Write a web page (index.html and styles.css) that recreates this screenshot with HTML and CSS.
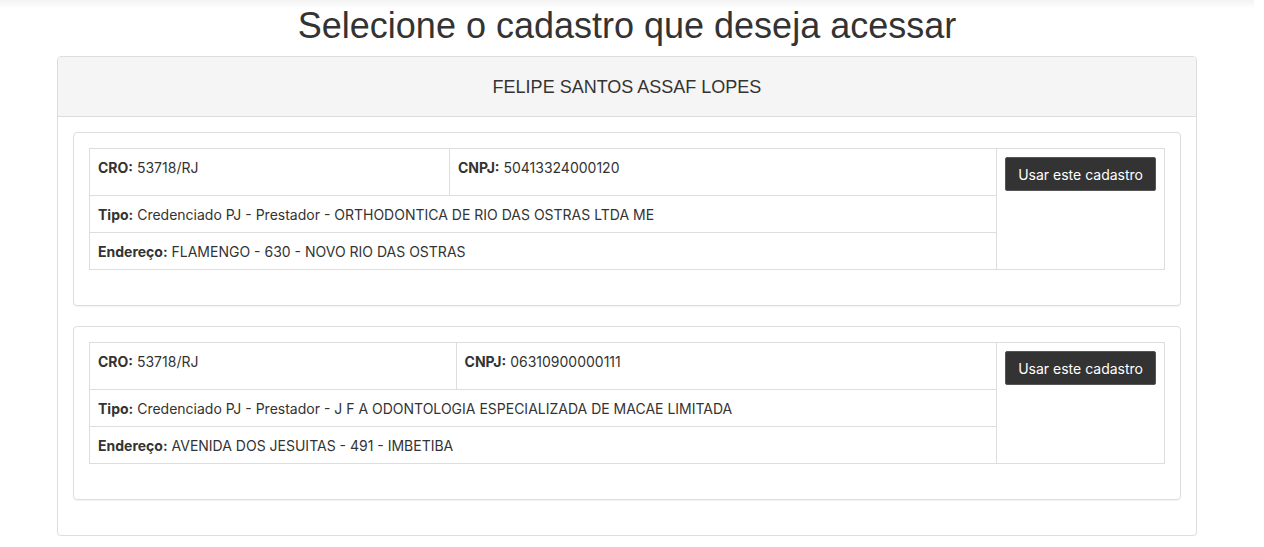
FILE: index.html
```html
<!DOCTYPE html>
<html lang="pt-BR">
<head>
  <meta charset="UTF-8">
  <meta name="viewport" content="width=device-width, initial-scale=1.0">
  <title>Selecione o cadastro</title>
  <link rel="stylesheet" href="styles.css">
</head>
<body>
  <!-- sombra da barra superior -->
  <div class="top-shadow"></div>

  <div class="container">
    <h1>Selecione o cadastro que deseja acessar</h1>

    <div class="panel">
      <div class="panel-heading">FELIPE SANTOS ASSAF LOPES</div>
      <div class="panel-body">

        <div class="card">
          <table class="cadastro">
            <tr class="first-row">
              <td><b>CRO:</b> 53718/RJ</td>
              <td><b>CNPJ:</b> 50413324000120</td>
              <td class="action" rowspan="3"><button class="btn">Usar este cadastro</button></td>
            </tr>
            <tr>
              <td colspan="2"><b>Tipo:</b> Credenciado PJ - Prestador - ORTHODONTICA DE RIO DAS OSTRAS LTDA ME</td>
            </tr>
            <tr>
              <td colspan="2"><b>Endereço:</b> FLAMENGO - 630 - NOVO RIO DAS OSTRAS</td>
            </tr>
          </table>
        </div>

        <div class="card">
          <table class="cadastro">
            <tr class="first-row">
              <td><b>CRO:</b> 53718/RJ</td>
              <td><b>CNPJ:</b> 06310900000111</td>
              <td class="action" rowspan="3"><button class="btn">Usar este cadastro</button></td>
            </tr>
            <tr>
              <td colspan="2"><b>Tipo:</b> Credenciado PJ - Prestador - J F A ODONTOLOGIA ESPECIALIZADA DE MACAE LIMITADA</td>
            </tr>
            <tr>
              <td colspan="2"><b>Endereço:</b> AVENIDA DOS JESUITAS - 491 - IMBETIBA</td>
            </tr>
          </table>
        </div>

      </div>
    </div>
  </div>
</body>
</html>
```

FILE: styles.css
```css
* {
  margin: 0;
  padding: 0;
  box-sizing: border-box;
}

body {
  background: #fff;
  color: #333;
  font-family: "Liberation Sans", Arial, sans-serif;
  font-size: 14px;
  padding-right: 10px; /* espaço da barra de rolagem */
}

.top-shadow {
  height: 8px;
  background: linear-gradient(#f3f3f3, #fff);
  margin-bottom: -8px;
}

.container {
  width: 1140px;
  margin: 0 auto;
}

h1 {
  font-size: 36px;
  font-weight: 400;
  line-height: 40px;
  text-align: center;
  margin: 6px 0 10px;
}

/* Painel principal */
.panel {
  border: 1px solid #ddd;
  border-radius: 4px;
  box-shadow: 0 1px 1px rgba(0, 0, 0, 0.05);
}

.panel-heading {
  background: #f5f5f5;
  border-bottom: 1px solid #ddd;
  border-radius: 3px 3px 0 0;
  font-size: 18px;
  line-height: 21px;
  padding: 20px 15px 18px;
  text-align: center;
}

.panel-body {
  padding: 15px;
}

/* Cada cadastro */
.card {
  border: 1px solid #ddd;
  border-radius: 4px;
  padding: 15px;
  margin-bottom: 20px;
  box-shadow: 0 1px 1px rgba(0, 0, 0, 0.05);
}

.cadastro {
  width: 100%;
  border-collapse: collapse;
  margin-bottom: 20px;
  font-family: Inter, "Liberation Sans", sans-serif;
  font-size: 14px;
}

.cadastro td {
  border: 1px solid #ddd;
  padding: 9px 8px 7px;
  line-height: 20px;
  vertical-align: top;
}

.cadastro b {
  font-weight: 700;
}

.cadastro .first-row {
  height: 47px;
}

.cadastro .action {
  width: 1%;
  white-space: nowrap;
  padding-top: 8px;
}

.btn {
  background: #333;
  color: #fff;
  border: 1px solid #555;
  border-radius: 2px;
  padding: 7px 12px 5px;
  font-family: Inter, "Liberation Sans", sans-serif;
  font-size: 14px;
  line-height: 20px;
  cursor: pointer;
}
```
